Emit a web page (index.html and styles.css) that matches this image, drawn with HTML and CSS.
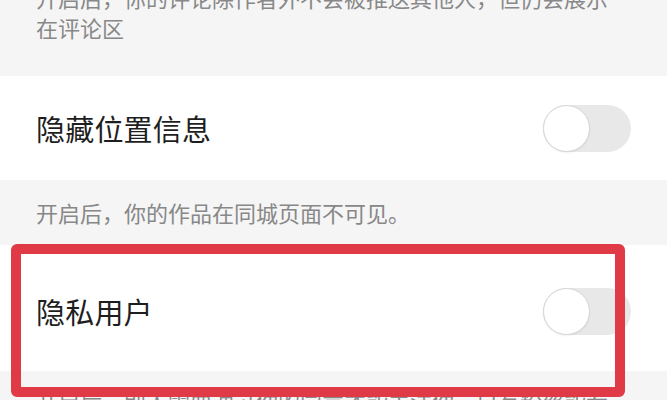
FILE: index.html
```html
<!DOCTYPE html>
<html lang="zh-CN">
<head>
<meta charset="utf-8">
<title>隐私设置</title>
<link rel="stylesheet" href="styles.css">
</head>
<body>
<div class="page">
  <div class="desc desc-first">开启后，你的评论除作者外不会被推送其他人，但仍会展示在评论区</div>
  <div class="row">
    <span class="label">隐藏位置信息</span>
    <span class="toggle"><span class="knob"></span></span>
  </div>
  <div class="desc desc-short">开启后，你的作品在同城页面不可见。</div>
  <div class="row row-tall">
    <span class="label">隐私用户</span>
    <span class="toggle"><span class="knob"></span></span>
  </div>
  <div class="desc desc-last">开启后，别人需要通过你的同意才能关注你，只有粉丝能看到你的作品</div>
  <div class="highlight"></div>
</div>
</body>
</html>
```

FILE: styles.css
```css
html, body {
  margin: 0;
  padding: 0;
  background: #f5f5f5;
  overflow: hidden;
}
body {
  width: 667px;
  height: 400px;
  font-family: "Noto Sans CJK SC", "Noto Sans", sans-serif;
}
.page {
  position: relative;
  display: flex;
  flex-direction: column;
  margin-top: -35px;
}
.desc {
  background: #f5f5f5;
  color: #888888;
  font-size: 22px;
  line-height: 30px;
  padding: 17px 56px 34px 36px;
}
.desc-short {
  padding-bottom: 18px;
}
.desc-last {
  padding-top: 14px;
}
.row {
  background: #ffffff;
  height: 104px;
  display: flex;
  align-items: center;
  justify-content: space-between;
  padding: 0 36px 0 36px;
}
.row-tall {
  height: 120px;
  padding-top: 6px;
}
.label {
  font-size: 29px;
  color: #1e1e1e;
  letter-spacing: 0.2px;
}
.toggle {
  width: 88px;
  height: 47px;
  border-radius: 24px;
  background: #e8e8e8;
  display: flex;
  align-items: center;
}
.knob {
  width: 45px;
  height: 45px;
  border-radius: 50%;
  background: #ffffff;
  border: 1px solid #d6d6d6;
  box-shadow: 0 1px 2px rgba(0,0,0,0.06);
}
.highlight {
  position: absolute;
  left: 11px;
  top: 279px;
  width: 594px;
  height: 133px;
  border: 10px solid #e03a47;
  border-radius: 6px;
}
```
